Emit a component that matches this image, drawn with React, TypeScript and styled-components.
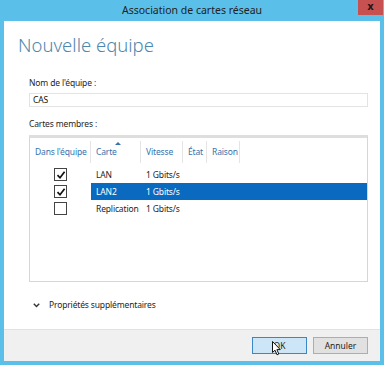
import { createGlobalStyle, styled } from 'styled-components';

const GlobalStyle = createGlobalStyle`
  html, body {
    margin: 0;
    padding: 0;
    background: #ffffff;
  }
  body {
    font-family: "Noto Sans", "Open Sans", sans-serif;
    color: #1e1e1e;
  }
`;

type Adapter = { name: string; speed: string; inTeam: boolean; selected?: boolean };

const adapters: Adapter[] = [
  { name: 'LAN', speed: '1 Gbits/s', inTeam: true },
  { name: 'LAN2', speed: '1 Gbits/s', inTeam: true, selected: true },
  { name: 'Replication', speed: '1 Gbits/s', inTeam: false },
];

const columns = '61px 50px 42px 24px 33px 1fr';

const CheckMark = () => (
  <svg width="10" height="10" viewBox="0 0 10 10">
    <path d="M1.5 5.2 L4 7.8 L8.6 1.8" fill="none" stroke="#111" strokeWidth="1.7" />
  </svg>
);

const Chevron = () => (
  <svg width="7" height="5" viewBox="0 0 7 5">
    <path d="M0.8 0.8 L3.5 3.6 L6.2 0.8" fill="none" stroke="#333" strokeWidth="1.4" />
  </svg>
);

const Cursor = () => (
  <svg width="10" height="15" viewBox="0 0 10 15">
    <path
      d="M0.5 0.5 L0.5 11.5 L3 9.2 L5 13.8 L6.8 13 L4.9 8.6 L8.3 8.6 Z"
      fill="#fff"
      stroke="#111"
      strokeWidth="1"
      strokeLinejoin="round"
    />
  </svg>
);

const App = () => {
  return (
    <>
      <GlobalStyle />
      <Window>
        <TitleBar>
          <span />
          <Title>Association de cartes réseau</Title>
          <CloseButton>x</CloseButton>
        </TitleBar>
        <Client>
          <Content>
            <Heading>Nouvelle équipe</Heading>
            <Form>
              <Label>Nom de l'équipe :</Label>
              <TextBox>CAS</TextBox>
              <Label $top={11}>Cartes membres :</Label>
              <ListBox>
                <HeaderRow>
                  <HeaderCell>Dans l'équipe</HeaderCell>
                  <HeaderCell $sorted>Carte</HeaderCell>
                  <HeaderCell>Vitesse</HeaderCell>
                  <HeaderCell>État</HeaderCell>
                  <HeaderCell>Raison</HeaderCell>
                  <HeaderFill />
                </HeaderRow>
                {adapters.map((a) => (
                  <Row key={a.name}>
                    <CheckCell>
                      <CheckBox>{a.inTeam && <CheckMark />}</CheckBox>
                    </CheckCell>
                    <RowBand $selected={a.selected}>
                      <Cell>{a.name}</Cell>
                      <Cell>{a.speed}</Cell>
                    </RowBand>
                  </Row>
                ))}
              </ListBox>
              <Expander>
                <Chevron />
                <span>Propriétés supplémentaires</span>
              </Expander>
            </Form>
          </Content>
          <Footer>
            <Button $primary>
              OK
              <CursorWrap>
                <Cursor />
              </CursorWrap>
            </Button>
            <Button>Annuler</Button>
          </Footer>
        </Client>
      </Window>
    </>
  );
};

export default App;

const Window = styled.div`
  display: flex;
  flex-direction: column;
  width: 384px;
  height: 365px;
  background: #5ac0ea;
  box-sizing: border-box;
  padding-bottom: 4px;
`;

const TitleBar = styled.div`
  display: grid;
  grid-template-columns: 1fr auto 1fr;
  align-items: start;
  height: 21px;
  flex-shrink: 0;
`;

const Title = styled.div`
  padding-top: 3px;
  font-size: 10.5px;
  line-height: 14px;
  color: #222;
`;

const CloseButton = styled.div`
  justify-self: end;
  width: 25px;
  height: 15px;
  margin-right: 1px;
  background: #c75050;
  color: #1a1a1a;
  font-family: "DejaVu Sans", sans-serif;
  font-weight: 700;
  font-size: 10px;
  line-height: 14px;
  text-align: center;
`;

const Client = styled.div`
  display: flex;
  flex-direction: column;
  flex: 1;
  margin: 0 4px 0 4px;
  background: #ffffff;
`;

const Content = styled.div`
  flex: 1;
  padding: 12px 12px 0 14px;
`;

const Heading = styled.div`
  font-size: 18.5px;
  font-weight: 300;
  line-height: 24px;
  color: #4f88ad;
`;

const Form = styled.div`
  display: flex;
  flex-direction: column;
  padding: 20px 0 0 11px;
  font-size: 8.5px;
  letter-spacing: -0.15px;
`;

const Label = styled.div<{ $top?: number }>`
  margin-top: ${({ $top }) => $top ?? 0}px;
  line-height: 12px;
  color: #1e1e1e;
`;

const TextBox = styled.div`
  margin-top: 4px;
  height: 12px;
  padding-left: 3px;
  border: 1px solid #e3e3e3;
  line-height: 12px;
  color: #111;
`;

const ListBox = styled.div`
  display: flex;
  flex-direction: column;
  height: 147px;
  margin-top: 5px;
  border: 1px solid #d6d6d6;
  border-top: 3px solid #dedede;
  box-sizing: border-box;
`;

const HeaderRow = styled.div`
  display: grid;
  grid-template-columns: ${columns};
  height: 22px;
  margin-top: 3px;
  margin-bottom: 3px;
`;

const HeaderCell = styled.div<{ $sorted?: boolean }>`
  position: relative;
  padding-left: 5px;
  border-right: 1px solid #e5e5e5;
  line-height: 22px;
  color: #3672ae;
  white-space: nowrap;

  &::before {
    content: '';
    display: ${({ $sorted }) => ($sorted ? 'block' : 'none')};
    position: absolute;
    top: 1px;
    left: 24px;
    border-left: 3px solid transparent;
    border-right: 3px solid transparent;
    border-bottom: 3px solid #3672ae;
  }
`;

const HeaderFill = styled.div``;

const Row = styled.div`
  display: grid;
  grid-template-columns: 61px 1fr;
  height: 17px;
`;

const CheckCell = styled.div`
  display: flex;
  align-items: center;
  justify-content: center;
`;

const CheckBox = styled.div`
  display: flex;
  align-items: center;
  justify-content: center;
  width: 11px;
  height: 11px;
  border: 1px solid #444;
  background: #fff;
`;

const RowBand = styled.div<{ $selected?: boolean }>`
  display: grid;
  grid-template-columns: 50px 1fr;
  background: ${({ $selected }) => ($selected ? '#0a6ac0' : 'transparent')};
  color: ${({ $selected }) => ($selected ? '#ffffff' : '#1e1e1e')};
`;

const Cell = styled.div`
  padding-left: 5px;
  line-height: 17px;
  white-space: nowrap;
`;

const Expander = styled.div`
  display: flex;
  align-items: center;
  gap: 9px;
  margin-top: 17px;
  padding-left: 4px;
  line-height: 12px;
  color: #1e1e1e;
`;

const Footer = styled.div`
  display: flex;
  justify-content: flex-end;
  gap: 6px;
  height: 32px;
  padding: 7px 12px 0 0;
  box-sizing: border-box;
  background: #f0f0f0;
  border-top: 1px solid #e2e2e2;
`;

const Button = styled.div<{ $primary?: boolean }>`
  position: relative;
  width: 53px;
  height: 15px;
  border: 1px solid ${({ $primary }) => ($primary ? '#3c86c4' : '#adadad')};
  background: ${({ $primary }) => ($primary ? '#cde6f7' : '#e1e1e1')};
  font-size: 8.5px;
  line-height: 15px;
  text-align: center;
  color: #1e1e1e;
`;

const CursorWrap = styled.div`
  position: absolute;
  left: 19px;
  top: 3px;
  line-height: 0;
`;
